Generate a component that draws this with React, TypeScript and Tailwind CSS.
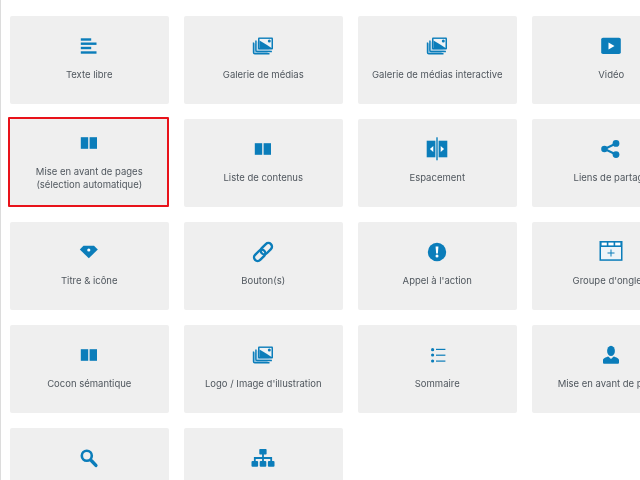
import type { ReactNode } from "react";

const BLUE = "#0b7dba";

const Svg = ({ children }: { children: ReactNode }) => (
    <svg width="24" height="24" viewBox="0 0 24 24" fill={BLUE} className="shrink-0 overflow-visible">
        {children}
    </svg>
);

const TextIcon = () => (
    <Svg>
        <rect x="3.8" y="4.3" width="10.4" height="2.4" />
        <rect x="3.8" y="8.5" width="15.7" height="2.4" />
        <rect x="3.8" y="12.8" width="10.4" height="2.4" />
        <rect x="3.8" y="17.3" width="15.7" height="2.4" />
    </Svg>
);

const GalleryIcon = () => (
    <Svg>
        <path d="M2.500 8.500v10c0 .8.6 1.300 1.300 1.300h14.700" fill="#8fc3e0" stroke={BLUE} strokeWidth="1.400" />
        <path d="M4.900 6.500v9.700c0 .8.6 1.300 1.300 1.300h14.700" fill="#bcd9ea" stroke={BLUE} strokeWidth="1.400" />
        <rect x="7" y="3.400" width="15" height="12" rx="1" />
        <rect x="8.500" y="4.900" width="12" height="9" fill="#eef3f6" />
        <path d="M8.500 6.500l7.500 4.500 4.500 2.900H8.500z" fill={BLUE} />
        <circle cx="18.300" cy="6.900" r="1.500" />
    </Svg>
);

const VideoIcon = () => (
    <Svg>
        <rect x="2.200" y="3.800" width="19.600" height="16.300" rx="1.800" />
        <path d="M9.500 8.600l6 3.400-6 3.400z" fill="#fff" />
    </Svg>
);

const ColumnsIcon = () => (
    <Svg>
        <rect x="3.800" y="6.200" width="7.400" height="11.600" />
        <rect x="12.600" y="6.200" width="7.400" height="11.600" />
    </Svg>
);

const SpacerIcon = () => (
    <Svg>
        <rect x="1.700" y="3.700" width="20.600" height="16.600" />
        <rect x="10.400" y="0.300" width="3.200" height="23" fill="#eef3f6" />
        <rect x="11.300" y="0.300" width="1.400" height="23" />
        <path d="M8.300 9l-3.400 3 3.400 3zM15.700 9l3.400 3-3.400 3z" fill="#fff" />
    </Svg>
);

const ShareIcon = () => (
    <Svg>
        <path d="M17 6.500L5.500 12 17 17.500" fill="none" stroke={BLUE} strokeWidth="2" />
        <circle cx="5.400" cy="12" r="3.200" />
        <circle cx="17" cy="6.400" r="3.400" />
        <circle cx="17" cy="17.600" r="3.400" />
    </Svg>
);

const DiamondIcon = () => (
    <Svg>
        <path d="M2.800 9.500l3.700-3.700H17l3.800 3.700-9 8.800z" />
        <circle cx="11.800" cy="10" r="1.600" fill="#fff" />
    </Svg>
);

const LinkIcon = () => (
    <Svg>
        <g transform="rotate(-45 12 12)" fill="none" stroke={BLUE} strokeWidth="2.400">
            <rect x="0.800" y="8.400" width="13" height="7.200" rx="3.600" />
            <rect x="10.200" y="8.400" width="13" height="7.200" rx="3.600" />
        </g>
    </Svg>
);

const AlertIcon = () => (
    <Svg>
        <circle cx="12" cy="12" r="9.200" />
        <path d="M10.600 6.500h2.800l-.5 7h-1.800z" fill="#fff" />
        <circle cx="12" cy="16" r="1.500" fill="#fff" />
    </Svg>
);

const TabsIcon = () => (
    <Svg>
        <rect x="0.500" y="1" width="23" height="19.800" />
        <rect x="2" y="7" width="20" height="12.300" fill="#eef4f8" />
        <rect x="2.600" y="2.600" width="5.200" height="2.800" fill="#fff" />
        <rect x="9.400" y="2.600" width="5.200" height="2.800" fill="#fff" />
        <rect x="16.200" y="2.600" width="5.200" height="2.800" fill="#fff" />
        <path d="M11.500 9.500h1v3h3v1h-3v3h-1v-3h-3v-1h3z" />
    </Svg>
);

const ListIcon = () => (
    <Svg>
        <circle cx="7.600" cy="6.700" r="1.600" />
        <circle cx="7.600" cy="12" r="1.600" />
        <circle cx="7.600" cy="18" r="1.600" />
        <rect x="11" y="5.800" width="9.400" height="1.200" />
        <rect x="11" y="11.600" width="9.400" height="1.200" />
        <rect x="11" y="17.500" width="9.400" height="1.200" />
    </Svg>
);

const PersonIcon = () => (
    <Svg>
        <ellipse cx="12" cy="7.900" rx="3.900" ry="5.200" />
        <path d="M4 19.500v-2.200c0-2 2.600-2.700 5.300-3.700L12 16l2.700-2.400c2.700 1 5.300 1.700 5.300 3.700v2.200c0 .8-.5 1.300-1.300 1.300H5.300c-.8 0-1.300-.5-1.300-1.300z" />
    </Svg>
);

const SearchIcon = () => (
    <Svg>
        <circle cx="9.800" cy="9.800" r="5" fill="none" stroke={BLUE} strokeWidth="2.600" />
        <path d="M14.500 14.800l4.400 4.600" fill="none" stroke={BLUE} strokeWidth="3.400" strokeLinecap="round" />
    </Svg>
);

const SitemapIcon = () => (
    <Svg>
        <rect x="8.300" y="3" width="7.300" height="5.600" rx="0.800" />
        <path d="M12 8v4M3.800 15v-3h16.400v3M12 12v3" fill="none" stroke={BLUE} strokeWidth="1.800" />
        <rect x="0.500" y="15" width="6.600" height="5.700" rx="1" />
        <rect x="8.700" y="15" width="6.600" height="5.700" rx="1" />
        <rect x="16.900" y="15" width="6.600" height="5.700" rx="1" />
    </Svg>
);

type Block = { icon: ReactNode; label: ReactNode; selected?: boolean };

const blocks: Block[] = [
    { icon: <TextIcon />, label: "Texte libre" },
    { icon: <GalleryIcon />, label: "Galerie de médias" },
    { icon: <GalleryIcon />, label: "Galerie de médias interactive" },
    { icon: <VideoIcon />, label: "Vidéo" },
    {
        icon: <ColumnsIcon />,
        label: (
            <>
                Mise en avant de pages
                <br />
                (sélection automatique)
            </>
        ),
        selected: true,
    },
    { icon: <ColumnsIcon />, label: "Liste de contenus" },
    { icon: <SpacerIcon />, label: "Espacement" },
    { icon: <ShareIcon />, label: "Liens de partage" },
    { icon: <DiamondIcon />, label: "Titre & icône" },
    { icon: <LinkIcon />, label: "Bouton(s)" },
    { icon: <AlertIcon />, label: "Appel à l'action" },
    { icon: <TabsIcon />, label: "Groupe d'onglets" },
    { icon: <ColumnsIcon />, label: "Cocon sémantique" },
    { icon: <GalleryIcon />, label: "Logo / Image d'illustration" },
    { icon: <ListIcon />, label: "Sommaire" },
    { icon: <PersonIcon />, label: "Mise en avant de profils" },
    { icon: <SearchIcon />, label: "Recherche" },
    { icon: <SitemapIcon />, label: "Plan du site" },
];

const BlockCard = ({ icon, label, selected }: Block) => (
    <div className="relative flex h-[88px] flex-col items-center justify-center gap-[10px] rounded-[2px] bg-[#efefef] pb-[5px] text-center">
        {icon}
        <span className="whitespace-nowrap text-[9.5px] leading-[13px] text-[#50575e]">{label}</span>
        {selected && (
            <div className="absolute -left-[2px] -top-[2px] right-0 bottom-0 rounded-[1px] border-2 border-[#e8121a]" />
        )}
    </div>
);

export default function App() {
    return (
        <div className="h-[480px] w-[640px] overflow-hidden border-l-[1.5px] border-[#dcdcdc] bg-white pl-[8.5px] pt-4 font-['Inter',sans-serif] blur-[0.4px]">
            <div className="grid w-[700px] grid-cols-[repeat(4,159.5px)] gap-x-[14.5px] gap-y-[15px]">
                {blocks.map((b, i) => (
                    <BlockCard key={i} {...b} />
                ))}
            </div>
        </div>
    );
}
